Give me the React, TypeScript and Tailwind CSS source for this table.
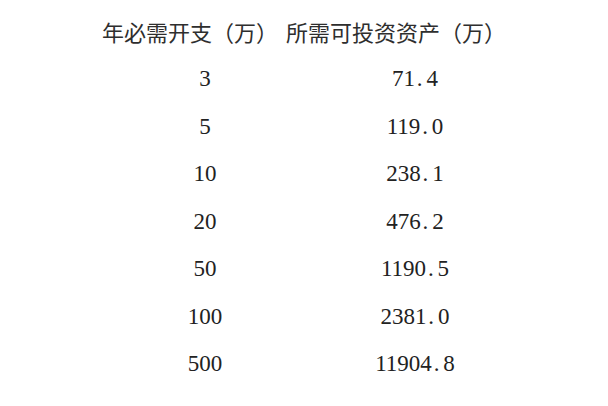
const rows: [string, string][] = [
  ['3', '71.4'],
  ['5', '119.0'],
  ['10', '238.1'],
  ['20', '476.2'],
  ['50', '1190.5'],
  ['100', '2381.0'],
  ['500', '11904.8'],
];

// SimSun-style half-width period: give the dot a full digit advance
function Num({ value }: { value: string }) {
  const [int, dec] = value.split('.');
  if (dec === undefined) return <>{value}</>;
  return (
    <>
      {int}
      <span className="inline-block w-[0.5em] pl-[0.08em] text-left">.</span>
      {dec}
    </>
  );
}

export default function App() {
  return (
    <div className="w-[608px] h-[406px] bg-white pt-[7px] overflow-hidden">
      <div
        className="flex pl-[102px] text-[22px] leading-[48px] text-[#2e2e2e]"
        style={{ fontFamily: '"Noto Sans CJK SC", sans-serif' }}
      >
        <span className="w-[184px]">年必需开支（万）</span>
        <span>所需可投资资产（万）</span>
      </div>
      <div
        className="flex flex-col text-[23px] leading-[47.5px] text-[#222]"
        style={{ fontFamily: '"Liberation Serif", serif' }}
      >
        {rows.map(([a, b]) => (
          <div key={a} className="flex pl-[155px]">
            <div className="w-[100px] text-center">{a}</div>
            <div className="w-[100px]" />
            <div className="w-[120px] text-center">
              <Num value={b} />
            </div>
          </div>
        ))}
      </div>
    </div>
  );
}
